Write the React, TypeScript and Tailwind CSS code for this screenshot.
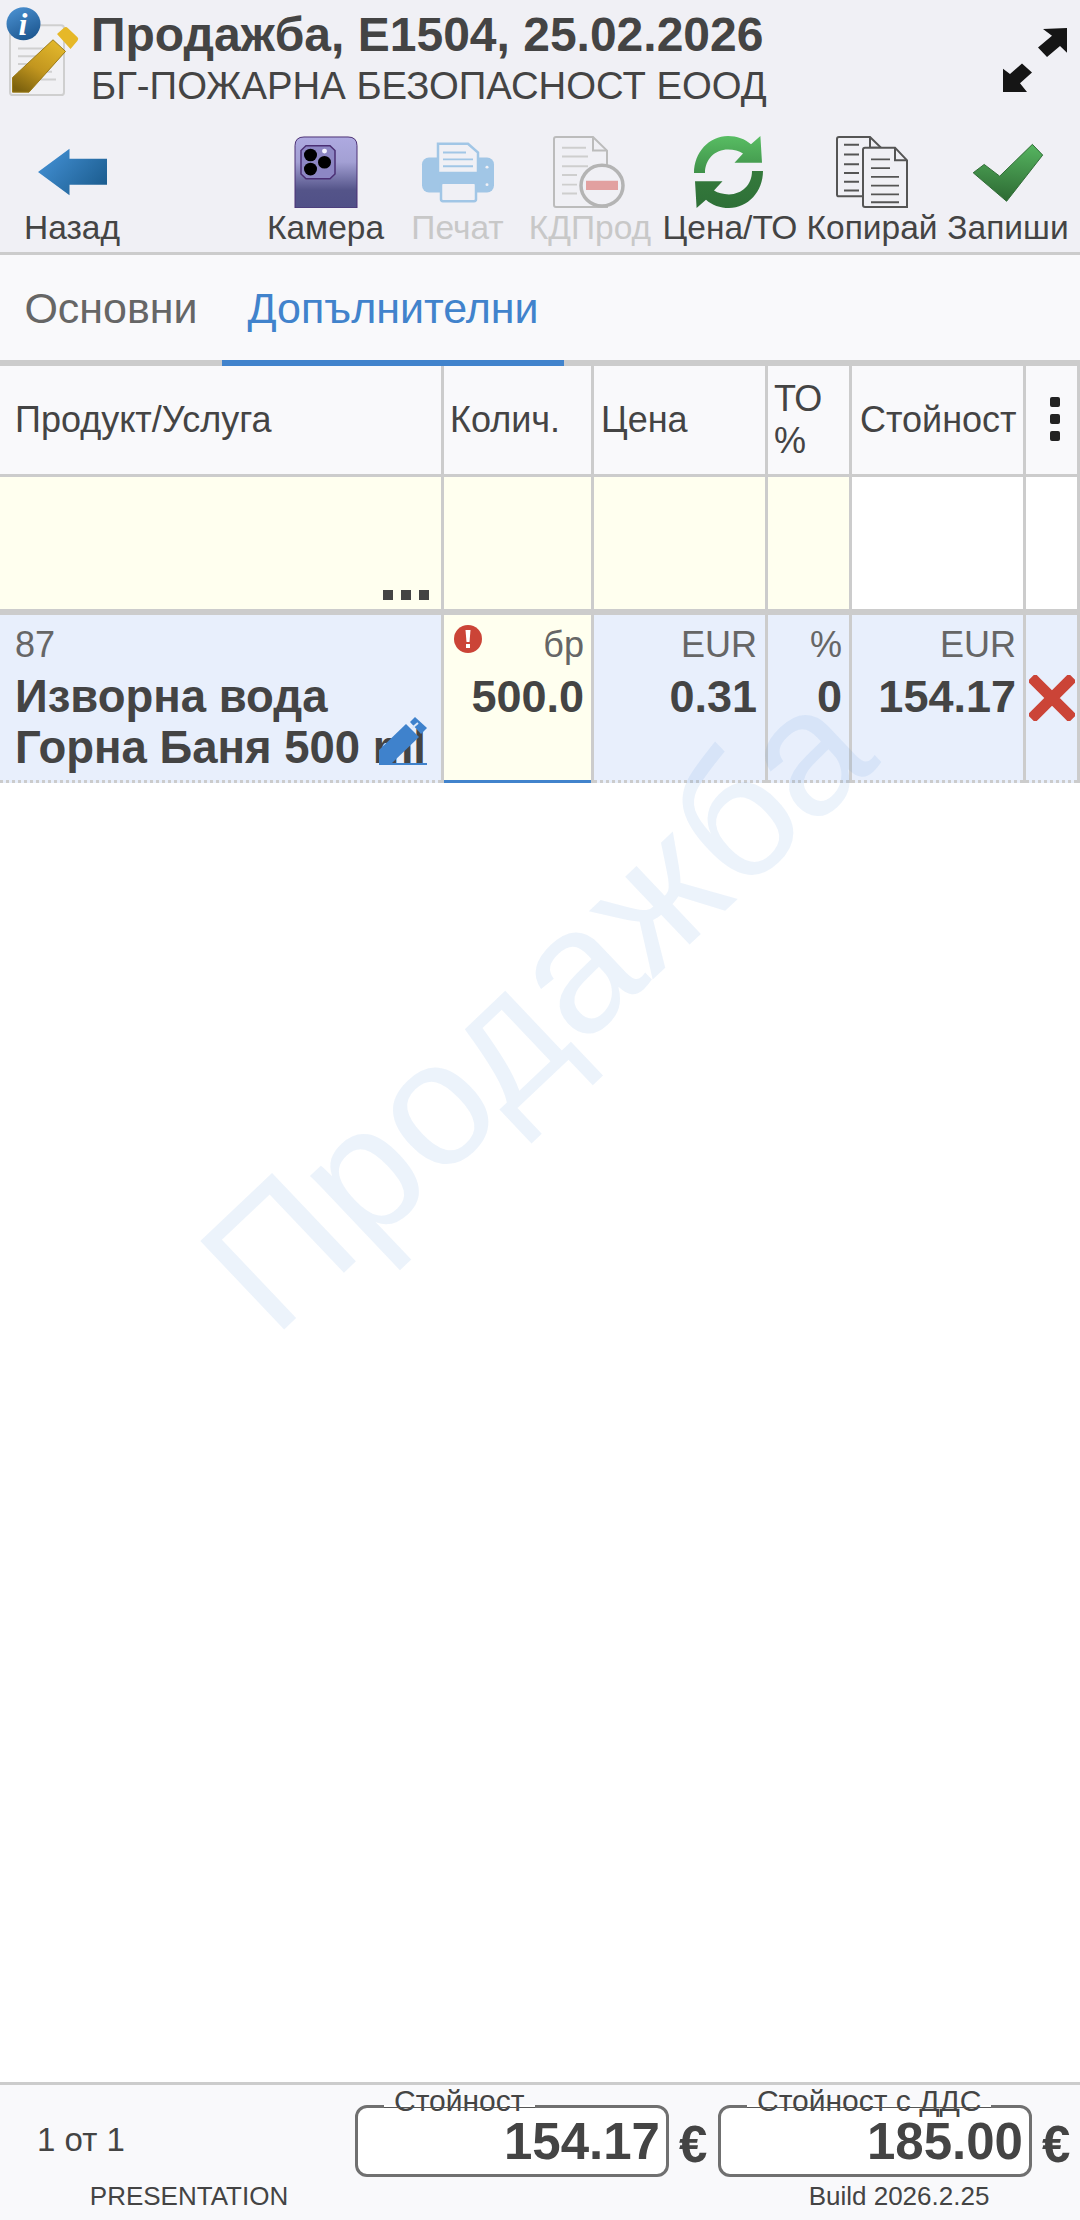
import * as React from "react";

function NoteIcon() {
  return (
    <svg width="80" height="97" viewBox="0 0 80 100" preserveAspectRatio="none" className="shrink-0">
      <defs>
        <linearGradient id="gold" x1="0.8" y1="0" x2="0.2" y2="1">
          <stop offset="0" stopColor="#e3b82c" />
          <stop offset="0.55" stopColor="#c2961f" />
          <stop offset="1" stopColor="#7d620e" />
        </linearGradient>
        <linearGradient id="info" x1="0.2" y1="0" x2="0.7" y2="1">
          <stop offset="0" stopColor="#4a90d0" />
          <stop offset="1" stopColor="#1c568f" />
        </linearGradient>
      </defs>
      <rect x="10" y="26" width="54" height="72" rx="3" fill="#f1f1f4" stroke="#cfcfcf" strokeWidth="2" />
      <path d="M18 50H44M18 58H44M18 66H44M18 74H52M18 82H56" stroke="#d0d0d0" strokeWidth="2" />
      <path d="M12.5 80L53 41L65.5 53L29 95H12.5Z" fill="url(#gold)" stroke="#9a7a14" strokeWidth="1" />
      <path d="M57 35L64 28.500Q66 27 68 29L77.500 38.500Q79 40 77.500 42L70.500 50.500Z" fill="#e6b828" />
      <circle cx="23.500" cy="24.500" r="17" fill="url(#info)" />
      <text x="23" y="36" textAnchor="middle" fill="#fff" fontSize="32" fontWeight="700" fontStyle="italic" fontFamily="Liberation Serif, serif">
        i
      </text>
    </svg>
  );
}

function ExpandIcon() {
  return (
    <svg width="64" height="64" viewBox="0 0 64 66" preserveAspectRatio="none">
      <path d="M64 0L40 1L49 8L35 20L44 30L57 18.500L64 25.500Z" fill="#151515" />
      <path d="M0 66V42L7 47.500L19 36.500L29 46L17 57L24 66Z" fill="#151515" />
    </svg>
  );
}

// toolbar pictures share one box: 74 wide, 72 tall
function ToolSvg({ children }: { children: React.ReactNode }) {
  return (
    <svg width="74" height="72" viewBox="0 0 74 74" preserveAspectRatio="none">
      {children}
    </svg>
  );
}

function BackIcon() {
  return (
    <ToolSvg>
      <defs>
        <linearGradient id="back" x1="0" y1="0.2" x2="1" y2="0.8">
          <stop offset="0" stopColor="#4390d4" />
          <stop offset="1" stopColor="#1b5c8e" />
        </linearGradient>
      </defs>
      <path d="M3 37L34.500 13V23.500H72V50H34.500V61Z" fill="url(#back)" />
    </ToolSvg>
  );
}

function PhoneIcon() {
  return (
    <ToolSvg>
      <defs>
        <linearGradient id="phone" x1="0.5" y1="0" x2="0.5" y2="1">
          <stop offset="0" stopColor="#aeaae0" />
          <stop offset="0.35" stopColor="#a3a0d4" />
          <stop offset="0.75" stopColor="#545489" />
          <stop offset="1" stopColor="#505087" />
        </linearGradient>
      </defs>
      <path d="M6 74V10Q6 1 15 1H59Q68 1 68 10V74Z" fill="url(#phone)" stroke="#4b2f74" strokeWidth="1" />
      <path d="M17 10H41L46 15V39L41 44H17L12 39V15Z" fill="#8d87c4" stroke="#4b2f74" strokeWidth="1.500" />
      <circle cx="21.500" cy="19.500" r="6.500" fill="#000" />
      <circle cx="35.500" cy="27" r="6.500" fill="#000" />
      <circle cx="21.500" cy="34" r="6.500" fill="#000" />
      <circle cx="35.500" cy="15.500" r="2.500" fill="#f4f4ff" />
    </ToolSvg>
  );
}

function PrinterIcon() {
  return (
    <ToolSvg>
      <rect x="1" y="22" width="72" height="36" rx="7" fill="#a1c6e6" />
      <path d="M17 38V8H47L57 17V38Z" fill="#f0f0f5" stroke="#a1c6e6" strokeWidth="2.500" />
      <path d="M22 17H45M22 24H52M22 31H52" stroke="#a1c6e6" strokeWidth="2" />
      <rect x="20" y="48" width="35" height="19" rx="2" fill="#f0f0f5" stroke="#a1c6e6" strokeWidth="2.500" />
      <circle cx="66" cy="32" r="1.500" fill="#f0f0f5" />
      <circle cx="66" cy="50" r="1.500" fill="#f0f0f5" />
    </ToolSvg>
  );
}

function DocMinusIcon() {
  return (
    <ToolSvg>
      <path d="M3 1H40L54 15V73H3Q1 73 1 71V3Q1 1 3 1Z" fill="#f0f0f5" stroke="#bcbcbc" strokeWidth="2" />
      <path d="M40 1V15H54" fill="none" stroke="#bcbcbc" strokeWidth="2" />
      <path d="M9 12H33M9 21H35M9 31H35M9 40H24M9 50H24M9 59H24" stroke="#cecece" strokeWidth="2" />
      <circle cx="49" cy="51" r="21" fill="#f0f0f5" stroke="#b4b4b4" strokeWidth="3.500" />
      <rect x="33" y="46" width="32" height="9.500" fill="#e2a0a0" />
    </ToolSvg>
  );
}

function RefreshIcon() {
  const arc = "M1 38C1 17 16 0 35 0C44 0 52 3 58 8.500L67.400 0L69 27.500H41.500L50 18C46 15.500 41 14 35 14C22 14 12 24 12 38Z";
  return (
    <ToolSvg>
      <defs>
        <linearGradient id="refreshTop" x1="0.5" y1="0" x2="0.5" y2="1">
          <stop offset="0" stopColor="#58bd63" />
          <stop offset="1" stopColor="#3f9149" />
        </linearGradient>
        <linearGradient id="refreshBottom" x1="0.5" y1="1" x2="0.5" y2="0">
          <stop offset="0" stopColor="#357a3c" />
          <stop offset="1" stopColor="#2e7037" />
        </linearGradient>
      </defs>
      <path d={arc} fill="url(#refreshTop)" />
      <path d={arc} fill="url(#refreshBottom)" transform="rotate(180 35.500 37)" />
    </ToolSvg>
  );
}

function CopyIcon() {
  return (
    <ToolSvg>
      <path d="M4 1H35L49 15V62H4Q2 62 2 60V3Q2 1 4 1Z" fill="#f0f0f5" stroke="#555" strokeWidth="2" />
      <path d="M35 1V12H45" fill="none" stroke="#555" strokeWidth="2" />
      <path d="M9 9H24M9 19H24M9 29H24M9 38H24M9 47H24M9 56H24" stroke="#555" strokeWidth="2" />
      <path d="M30 12H60L72 25V73H30Q28 73 28 71V14Q28 12 30 12Z" fill="#f0f0f5" stroke="#555" strokeWidth="2" />
      <path d="M60 12V25H72" fill="none" stroke="#555" strokeWidth="2" />
      <path d="M36 24H55M36 33H55M36 42H64M36 51H64M36 60H64M36 68H64" stroke="#555" strokeWidth="2" />
    </ToolSvg>
  );
}

function CheckIcon() {
  return (
    <ToolSvg>
      <defs>
        <linearGradient id="check" x1="0.6" y1="0" x2="0.5" y2="1">
          <stop offset="0" stopColor="#55b35f" />
          <stop offset="1" stopColor="#2d6a33" />
        </linearGradient>
      </defs>
      <path d="M2.200 37.800L13.200 29.200L28.700 41.300L61.400 8.600L71.700 19.600L35.600 67.100Z" fill="url(#check)" stroke="#2f6b35" strokeWidth="1" strokeLinejoin="round" />
    </ToolSvg>
  );
}

function EditIcon() {
  return (
    <svg width="49" height="49" viewBox="0 0 49 49">
      <path d="M0 46V33L27 7L40 20L13 46Z" fill="#3f82cc" />
      <path d="M31 5L36 0L48 11L42 17Z" fill="#3f82cc" />
      <path d="M33 11L39 6" stroke="#dce8f8" strokeWidth="2" />
      <rect x="0" y="46" width="48" height="2" fill="#3f82cc" />
    </svg>
  );
}

function ErrorIcon() {
  return (
    <svg width="28" height="28" viewBox="0 0 28 28">
      <circle cx="14" cy="14" r="14" fill="#cb4437" />
      <path d="M11.500 5H16.500L15.500 17H12.500Z" fill="#fff" />
      <rect x="12" y="19" width="4" height="4" fill="#fff" />
    </svg>
  );
}

function CrossIcon() {
  return (
    <svg width="46" height="46" viewBox="0 0 46 46">
      <path d="M4 4L42 42M42 4L4 42" stroke="#cb4437" strokeWidth="12.500" strokeLinecap="square" transform="translate(23 23) scale(0.88) translate(-23 -23)" />
    </svg>
  );
}

const actions = [
  { label: "Камера", width: "w-[133px]", icon: <PhoneIcon />, disabled: false },
  { label: "Печат", width: "w-[131px]", icon: <PrinterIcon />, disabled: true },
  { label: "КДПрод", width: "w-[134px]", icon: <DocMinusIcon />, disabled: true },
  { label: "Цена/ТО", width: "w-[146px]", icon: <RefreshIcon />, disabled: false },
  { label: "Копирай", width: "w-[138px]", icon: <CopyIcon />, disabled: false },
  { label: "Запиши", width: "w-[134px]", icon: <CheckIcon />, disabled: false },
];

function ToolButton({ label, icon, width, disabled }: { label: string; icon: React.ReactNode; width: string; disabled?: boolean }) {
  return (
    <div className={`flex flex-col items-center ${width}`}>
      {icon}
      <span className={`mt-[1px] whitespace-nowrap text-[33.5px] leading-[38px] ${disabled ? "text-[#c8c8c8]" : "text-[#444]"}`}>{label}</span>
    </div>
  );
}

function Total({ legend, value }: { legend: string; value: string }) {
  return (
    <div className="flex items-start">
      <fieldset className="h-[92px] w-[314px] rounded-[12px] border-[3px] border-[#707070] bg-white">
        <legend className="relative ml-[26px] h-[42px] px-[10px] pt-[1px] text-[30px] leading-[30px] text-[#444]">
          {legend}
          <span className="absolute inset-x-0 top-[22px] h-px bg-[#555]" />
        </legend>
        <div className="-mt-[10px] pr-[6px] text-right text-[51px] font-bold leading-[50px] text-[#444]">{value}</div>
      </fieldset>
      <span className="ml-[10px] mt-[35px] text-[51px] font-bold leading-[50px] text-[#444]">€</span>
    </div>
  );
}

const cellBase = "border-r-[3px] border-[#ccc]";
const headCell = "flex h-[111px] items-center border-b-[3px] bg-[#f9f9fb] text-[36px]";
const dottedEdge = "absolute inset-x-0 bottom-0 h-[3px] border-b-[3px] border-dotted border-[#ccc]";

export default function App() {
  return (
    <div className="relative flex h-[2220px] w-[1080px] flex-col overflow-hidden bg-white font-['Liberation_Sans',sans-serif] text-[#444]">
      <header className="h-[255px] border-b-[3px] border-[#ccc] bg-[#f0f0f5]">
        <div className="flex h-[136px] items-start">
          <NoteIcon />
          <div className="ml-[11px] flex-1 pt-[9px]">
            <div className="whitespace-nowrap text-[48px] font-bold leading-[52px]">Продажба, Е1504, 25.02.2026</div>
            <div className="mt-[3px] whitespace-nowrap text-[38.3px] leading-[44px] text-[#444]">БГ-ПОЖАРНА БЕЗОПАСНОСТ ЕООД</div>
          </div>
          <div className="mr-[13px] mt-[28px]">
            <ExpandIcon />
          </div>
        </div>
        <div className="flex items-start justify-between pr-[5px]">
          <div className="ml-[35px]">
            <ToolButton label="Назад" width="w-[74px]" icon={<BackIcon />} />
          </div>
          <div className="flex">
            {actions.map((a) => (
              <ToolButton key={a.label} label={a.label} width={a.width} icon={a.icon} disabled={a.disabled} />
            ))}
          </div>
        </div>
      </header>

      <nav className="flex h-[111px] border-b-[6px] border-[#ccc] bg-[#f9f9fb]">
        <div className="flex w-[222px] items-center justify-center pt-[1px] text-[43px] text-[#666]">Основни</div>
        <div className="relative flex w-[342px] items-center justify-center pt-[1px] text-[43px] text-[#4183cc]">
          Допълнителни
          <span className="absolute inset-x-0 -bottom-[6px] h-[6px] bg-[#4183cc]" />
        </div>
      </nav>

      <div className="grid grid-cols-[444px_150px_174px_84px_174px_54px]">
        {/* header row */}
        <div className={`${cellBase} ${headCell} pl-[15px]`}>Продукт/Услуга</div>
        <div className={`${cellBase} ${headCell} pl-[6px]`}>Колич.</div>
        <div className={`${cellBase} ${headCell} pl-[7px]`}>Цена</div>
        <div className={`${cellBase} ${headCell} pl-[6px] leading-[42px]`}>ТО %</div>
        <div className={`${cellBase} ${headCell} pl-[8px]`}>Стойност</div>
        <div className={`${cellBase} ${headCell} justify-center pb-[3px] pl-[6px]`}>
          <div className="flex flex-col gap-[7px]">
            <span className="size-[10px] rounded-[2px] bg-[#222]" />
            <span className="size-[10px] rounded-[2px] bg-[#222]" />
            <span className="size-[10px] rounded-[2px] bg-[#222]" />
          </div>
        </div>

        {/* input row */}
        <div className={`${cellBase} flex h-[138px] items-end justify-end gap-[8px] border-b-[6px] bg-[#ffffef] pb-[9px] pr-[12px]`}>
          <span className="size-[10px] bg-[#444]" />
          <span className="size-[10px] bg-[#444]" />
          <span className="size-[10px] bg-[#444]" />
        </div>
        <div className={`${cellBase} h-[138px] border-b-[6px] bg-[#ffffef]`} />
        <div className={`${cellBase} h-[138px] border-b-[6px] bg-[#ffffef]`} />
        <div className={`${cellBase} h-[138px] border-b-[6px] bg-[#ffffef]`} />
        <div className={`${cellBase} h-[138px] border-b-[6px] bg-white`} />
        <div className={`${cellBase} h-[138px] border-b-[6px] bg-white`} />

        {/* item row */}
        <div className={`${cellBase} relative h-[168px] bg-[#e8effc] pl-[15px] pt-[11px]`}>
          <div className="text-[36px] leading-[38px] text-[#666]">87</div>
          <div className="mt-[7px] text-[45.5px] font-bold leading-[51px]">Изворна вода Горна Баня 500 ml</div>
          <span className="absolute right-[13px] top-[102px]">
            <EditIcon />
          </span>
          <span className={dottedEdge} />
        </div>
        <div className={`${cellBase} relative h-[168px] bg-[#ffffef] pr-[7px] pt-[11px] text-right`}>
          <span className="absolute left-[10px] top-[10px]">
            <ErrorIcon />
          </span>
          <div className="text-[36px] leading-[38px] text-[#666]">бр</div>
          <div className="mt-[7px] text-[45px] font-bold leading-[51px]">500.0</div>
          <span className="absolute inset-x-0 bottom-0 h-[3px] bg-[#4183cc]" />
        </div>
        <div className={`${cellBase} relative h-[168px] bg-[#e8effc] pr-[8px] pt-[11px] text-right`}>
          <div className="text-[36px] leading-[38px] text-[#666]">EUR</div>
          <div className="mt-[7px] text-[45px] font-bold leading-[51px]">0.31</div>
          <span className={dottedEdge} />
        </div>
        <div className={`${cellBase} relative h-[168px] bg-[#e8effc] pr-[7px] pt-[11px] text-right`}>
          <div className="text-[36px] leading-[38px] text-[#666]">%</div>
          <div className="mt-[7px] text-[45px] font-bold leading-[51px]">0</div>
          <span className={dottedEdge} />
        </div>
        <div className={`${cellBase} relative h-[168px] bg-[#e8effc] pr-[7px] pt-[11px] text-right`}>
          <div className="text-[36px] leading-[38px] text-[#666]">EUR</div>
          <div className="mt-[7px] text-[45px] font-bold leading-[51px]">154.17</div>
          <span className={dottedEdge} />
        </div>
        <div className={`${cellBase} relative h-[168px] bg-[#e8effc] pl-[3px] pt-[60px]`}>
          <CrossIcon />
          <span className={dottedEdge} />
        </div>
      </div>

      <div className="flex-1 bg-white" />

      <footer className="h-[138px] border-t-[3px] border-[#ccc] bg-[#f9f9fb]">
        <div className="flex h-[92px] items-start">
          <div className="w-[355px] pl-[37px] pt-[36px] text-[33px] leading-[38px]">1 от 1</div>
          <div className="w-[363px]">
            <Total legend="Стойност" value="154.17" />
          </div>
          <Total legend="Стойност с ДДС" value="185.00" />
        </div>
        <div className="flex pt-[5px] text-[26px] leading-[28px]">
          <div className="w-[378px] text-center">PRESENTATION</div>
          <div className="ml-[340px] w-[362px] text-center">Build 2026.2.25</div>
        </div>
      </footer>

      {/* watermark lies over the table */}
      <div className="pointer-events-none absolute left-[536px] top-[1007px] -translate-x-1/2 -translate-y-1/2 rotate-[-43.5deg] whitespace-nowrap text-[177px] leading-none text-[#4285d6]/10">
        Продажба
      </div>
    </div>
  );
}
